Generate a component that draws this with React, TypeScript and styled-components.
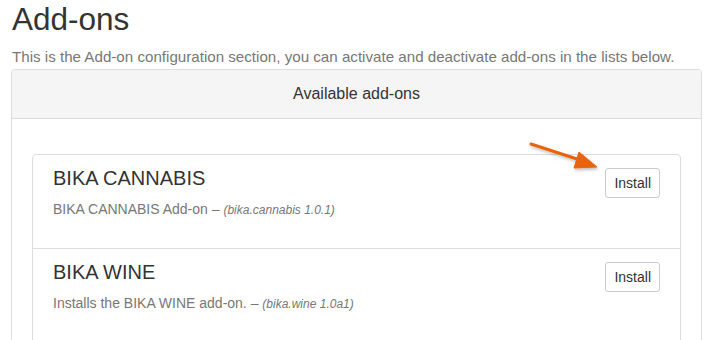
import React from 'react';
import styled, { createGlobalStyle } from 'styled-components';

const GlobalStyle = createGlobalStyle`
  body {
    margin: 0;
    background: #fff;
    font-family: "Liberation Sans", Arial, sans-serif;
    color: #333;
    overflow: hidden;
  }
`;

const Page = styled.div`
  position: relative;
  height: 340px;
  overflow: hidden;
  padding: 0 9px 0 11px;
`;

const Title = styled.h1`
  margin: 2px 0 10px 1px;
  font-size: 31.5px;
  font-weight: 400;
  line-height: 1.1;
  color: #333;
`;

const Lead = styled.p`
  margin: 0 0 2px 1px;
  font-size: 15.15px;
  line-height: 20px;
  color: #777;
  white-space: nowrap;
`;

const Panel = styled.div`
  border: 1px solid #ddd;
  border-radius: 4px;
  background: #fff;
  height: 300px;
`;

const PanelHeading = styled.div`
  padding: 13px 15px;
  background: #f5f5f5;
  border-bottom: 1px solid #ddd;
  border-radius: 3px 3px 0 0;
  text-align: center;
  font-size: 16px;
  line-height: 22px;
  color: #333;
`;

const PanelBody = styled.div`
  padding: 35px 20px 0;
`;

const ListGroup = styled.ul`
  margin: 0;
  padding: 0;
  list-style: none;
`;

const Item = styled.li`
  display: flex;
  justify-content: space-between;
  align-items: flex-start;
  padding: 12px 20px 28px;
  border: 1px solid #ddd;
  margin-bottom: -1px;

  &:first-child {
    border-radius: 4px 4px 0 0;
  }
`;

const ItemText = styled.div`
  display: flex;
  flex-direction: column;
  gap: 10px;
`;

const ItemTitle = styled.h4`
  margin: 0;
  font-size: 20px;
  font-weight: 400;
  line-height: 22px;
  color: #333;
`;

const ItemDesc = styled.p`
  margin: 0;
  font-size: 14px;
  line-height: 20px;
  color: #777;
`;

const Version = styled.em`
  font-size: 12px;
`;

const Button = styled.button`
  margin-top: 1px;
  padding: 5px 8px;
  font-family: "Liberation Sans", Arial, sans-serif;
  font-size: 14px;
  line-height: 18px;
  color: #333;
  background: #fff;
  border: 1px solid #ccc;
  border-radius: 3px;
  cursor: pointer;
`;

const Arrow = styled.svg`
  position: absolute;
  left: 0;
  top: 0;
  pointer-events: none;
  overflow: visible;
`;

const addons = [
  { name: 'BIKA CANNABIS', desc: 'BIKA CANNABIS Add-on', pkg: 'bika.cannabis 1.0.1' },
  { name: 'BIKA WINE', desc: 'Installs the BIKA WINE add-on.', pkg: 'bika.wine 1.0a1' },
];

export default function App() {
  return (
    <>
      <GlobalStyle />
      <Page>
        <Title>Add-ons</Title>
        <Lead>
          This is the Add-on configuration section, you can activate and deactivate add-ons in the lists below.
        </Lead>
        <Panel>
          <PanelHeading>Available add-ons</PanelHeading>
          <PanelBody>
            <ListGroup>
              {addons.map((a) => (
                <Item key={a.name}>
                  <ItemText>
                    <ItemTitle>{a.name}</ItemTitle>
                    <ItemDesc>
                      {a.desc} – <Version>({a.pkg})</Version>
                    </ItemDesc>
                  </ItemText>
                  <Button>Install</Button>
                </Item>
              ))}
            </ListGroup>
          </PanelBody>
        </Panel>
        <Arrow width="711" height="340">
          <defs>
            <filter id="sh" x="-20%" y="-20%" width="140%" height="160%">
              <feDropShadow dx="1" dy="2" stdDeviation="1.5" floodColor="#000" floodOpacity="0.25" />
            </filter>
          </defs>
          <g filter="url(#sh)" fill="#e8630a" stroke="#e8630a">
            <line x1="531" y1="144" x2="580" y2="160" strokeWidth="3" strokeLinecap="round" />
            <polygon points="597,167 579,152 574,168" strokeWidth="1" strokeLinejoin="round" />
          </g>
        </Arrow>
      </Page>
    </>
  );
}
